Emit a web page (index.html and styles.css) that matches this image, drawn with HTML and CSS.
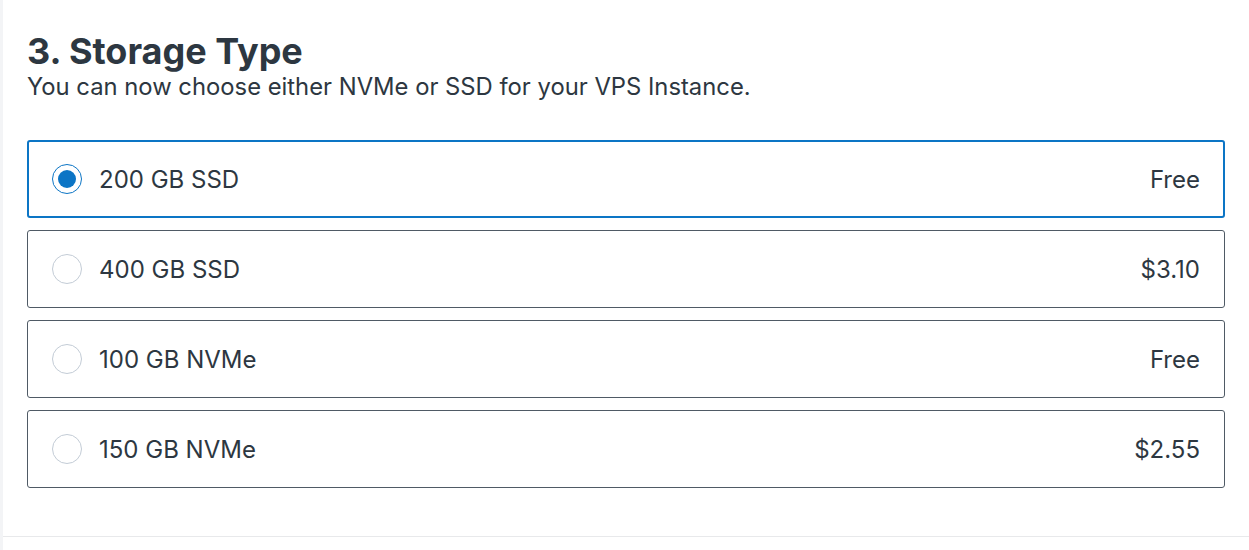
FILE: index.html
```html
<!DOCTYPE html>
<html>
<head>
<meta charset="utf-8">
<link rel="stylesheet" href="styles.css">
</head>
<body>
<div class="page">
  <section class="section">
    <h2 class="title">3. Storage Type</h2>
    <p class="subtitle">You can now choose either NVMe or SSD for your VPS Instance.</p>
    <div class="options">
      <label class="option selected">
        <span class="radio checked"></span>
        <span class="name">200 GB SSD</span>
        <span class="price">Free</span>
      </label>
      <label class="option">
        <span class="radio"></span>
        <span class="name">400 GB SSD</span>
        <span class="price">$3.10</span>
      </label>
      <label class="option">
        <span class="radio"></span>
        <span class="name">100 GB NVMe</span>
        <span class="price">Free</span>
      </label>
      <label class="option">
        <span class="radio"></span>
        <span class="name">150 GB NVMe</span>
        <span class="price">$2.55</span>
      </label>
    </div>
  </section>
</div>
</body>
</html>
```
FILE: styles.css
```css
html, body {
  margin: 0;
  padding: 0;
  background: #f3f4f6;
}
body {
  font-family: Inter, "Noto Sans", sans-serif;
  color: #2d3741;
}
.page {
  margin-left: 3px;
  background: #fff;
  height: 550px;
}
.section {
  padding: 29px 24px 48px 24px;
  border-bottom: 1px solid #e8e9eb;
}
.title {
  margin: 0;
  font-size: 36px;
  font-weight: 700;
  line-height: 44px;
  color: #2d3741;
}
.subtitle {
  margin: 0;
  font-size: 23.8px;
  line-height: 28px;
  color: #2d3741;
}
.options {
  margin-top: 39px;
  display: flex;
  flex-direction: column;
  gap: 12px;
}
.option {
  display: flex;
  align-items: center;
  height: 78px;
  box-sizing: border-box;
  border: 1px solid #4f5a65;
  border-radius: 3px;
  padding: 0 24px 0 24px;
  font-size: 24px;
}
.option.selected {
  border: 2px solid #0c75c5;
  padding: 0 23px 0 23px;
}
.radio {
  width: 30px;
  height: 30px;
  box-sizing: border-box;
  border-radius: 50%;
  border: 1px solid #c3ccd6;
  margin-right: 17px;
  flex: none;
  position: relative;
}
.radio.checked {
  border: 1px solid #0c75c5;
}
.radio.checked::after {
  content: "";
  position: absolute;
  left: 5px;
  top: 5px;
  width: 18px;
  height: 18px;
  border-radius: 50%;
  background: #0c75c5;
}
.name {
  flex: 1;
}
.price {
  text-align: right;
}
```
